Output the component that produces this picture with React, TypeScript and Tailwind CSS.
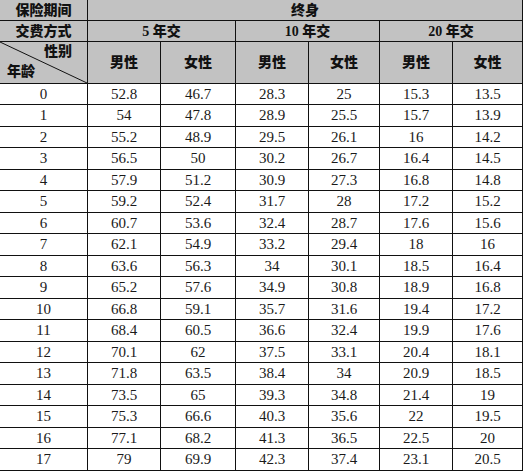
import React from "react";

const rows: [number, string, string, string, string, string, string][] = [
  [0, "52.8", "46.7", "28.3", "25", "15.3", "13.5"],
  [1, "54", "47.8", "28.9", "25.5", "15.7", "13.9"],
  [2, "55.2", "48.9", "29.5", "26.1", "16", "14.2"],
  [3, "56.5", "50", "30.2", "26.7", "16.4", "14.5"],
  [4, "57.9", "51.2", "30.9", "27.3", "16.8", "14.8"],
  [5, "59.2", "52.4", "31.7", "28", "17.2", "15.2"],
  [6, "60.7", "53.6", "32.4", "28.7", "17.6", "15.6"],
  [7, "62.1", "54.9", "33.2", "29.4", "18", "16"],
  [8, "63.6", "56.3", "34", "30.1", "18.5", "16.4"],
  [9, "65.2", "57.6", "34.9", "30.8", "18.9", "16.8"],
  [10, "66.8", "59.1", "35.7", "31.6", "19.4", "17.2"],
  [11, "68.4", "60.5", "36.6", "32.4", "19.9", "17.6"],
  [12, "70.1", "62", "37.5", "33.1", "20.4", "18.1"],
  [13, "71.8", "63.5", "38.4", "34", "20.9", "18.5"],
  [14, "73.5", "65", "39.3", "34.8", "21.4", "19"],
  [15, "75.3", "66.6", "40.3", "35.6", "22", "19.5"],
  [16, "77.1", "68.2", "41.3", "36.5", "22.5", "20"],
  [17, "79", "69.9", "42.3", "37.4", "23.1", "20.5"],
];

export default function App() {
  const hd =
    "border-r border-b border-[#111] bg-[#c2c2c2] flex items-center justify-center font-black text-[14px] text-[#111] whitespace-nowrap";
  const td =
    "border-r border-b border-[#111] flex items-center justify-center text-[15px] text-[#1a1a1a] leading-none whitespace-nowrap";
  return (
    <div
      className="w-[525px] h-[473px] bg-white overflow-hidden"
      style={{ fontFamily: '"Liberation Serif", "Noto Sans CJK SC", serif' }}
    >
      <div className="grid w-[523px] grid-cols-[88px_73px_75px_73px_71px_73px_70px] grid-rows-[21px_21px_42px_repeat(9,21px_22px)]">
        <div className={hd}>保险期间</div>
        <div className={hd + " col-span-6"}>终身</div>
        <div className={hd}>交费方式</div>
        <div className={hd + " col-span-2"}>5 年交</div>
        <div className={hd + " col-span-2"}>10 年交</div>
        <div className={hd + " col-span-2"}>20 年交</div>
        <div className="relative border-r border-b border-[#111] bg-[#c2c2c2] font-black text-[14px] text-[#111]">
          <svg
            className="absolute inset-0 w-full h-full"
            preserveAspectRatio="none"
            viewBox="0 0 87 41"
          >
            <line x1="0" y1="0" x2="87" y2="41" stroke="#111" strokeWidth="1" />
          </svg>
          <div className="relative flex flex-col h-full justify-between pt-[1px] pb-[2px]">
            <div className="self-end pr-[15px] leading-[18px]">性别</div>
            <div className="self-start pl-[7px] leading-[18px]">年龄</div>
          </div>
        </div>
        <div className={hd}>男性</div>
        <div className={hd}>女性</div>
        <div className={hd}>男性</div>
        <div className={hd}>女性</div>
        <div className={hd}>男性</div>
        <div className={hd}>女性</div>
        {rows.map((r, i) => (
          <React.Fragment key={i}>
            {r.map((c, j) => (
              <div key={j} className={td}>
                {c}
              </div>
            ))}
          </React.Fragment>
        ))}
      </div>
    </div>
  );
}
